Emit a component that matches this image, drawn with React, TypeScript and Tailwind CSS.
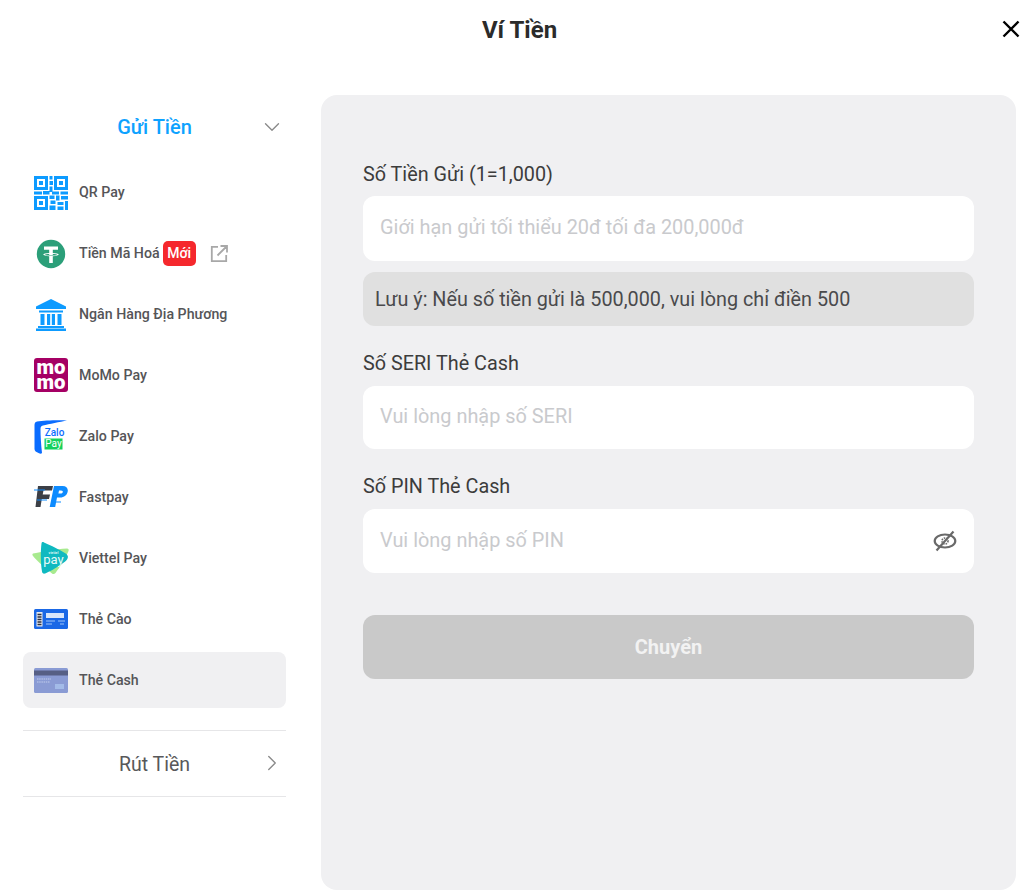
import React from "react";
import { ChevronDown, ChevronRight } from "lucide-react";

const QrIcon = () => (
  <svg width="34" height="34" viewBox="0 0 34 34" fill="#0d9bff">
    <path fillRule="evenodd" d="M0 0h14v14H0zM3 3v8h8V3zM20 0h14v14H20zM23 3v8h8V3zM0 20h14v14H0zM3 23v8h8v-8z" />
    <rect x="5" y="5" width="4" height="4" />
    <rect x="25" y="5" width="4" height="4" />
    <rect x="5" y="25" width="4" height="4" />
    <path d="M15.500 0h3v3.500h-3zM15.500 5h3.500v4h-3.500zM15.500 10.500h3V16h-3zM0 15.500h8v3H0zM9 15h6.500v3.500H9zM18 15.500h7v3h-7zM26.500 15.500H34v3h-7.500zM15.500 19.500h5v3.500h-5zM22 19.500h3.500v5H22zM27 20h7v3.500h-7zM16.500 24.500h5v3.500h-5zM23.500 26h6v3h-6zM31 25h3v9h-3zM15.500 29.500h6V34h-6zM23.500 30.500h6V34h-6z" />
  </svg>
);

const TetherIcon = () => (
  <svg width="30" height="30" viewBox="0 0 30 30">
    <circle cx="15" cy="15" r="14.200" fill="#2b9f79" />
    <path fill="#fff" d="M8 7.500h14v3.200h-5.200v3.200c3.300.2 5.900.9 5.900 1.700s-2.600 1.500-5.900 1.700V24h-3.600v-6.700c-3.300-.2-5.900-.9-5.900-1.700s2.600-1.500 5.900-1.700v-3.200H8z" />
    <path fill="#2b9f79" d="M13.200 14.900c-2.400.1-4.300.4-4.300.8 0 .5 2.700.9 6.100.9s6.100-.4 6.100-.9c0-.4-1.900-.7-4.300-.8v1c-1.200.1-2.400.1-3.600 0z" />
  </svg>
);

const BankIcon = () => (
  <svg width="30" height="32" viewBox="0 0 30 32" fill="#0d9bff">
    <path d="M15 0 30 7.500V10H0V7.500z" />
    <path d="M3 11.500h24v2H3zM4.500 15h4v11h-4zM11 15h3.200v11H11zM15.800 15H19v11h-3.200zM21.500 15h4v11h-4zM2 27h26v2H2zM0 29.500h30V32H0z" />
  </svg>
);

const MomoIcon = () => (
  <svg width="34" height="34" viewBox="0 0 34 34" className="-translate-y-px overflow-visible">
    <rect width="34" height="34" rx="3" fill="#a50064" />
    <text x="17" y="15.500" textAnchor="middle" textLength="29" lengthAdjust="spacingAndGlyphs" fontFamily="Roboto, sans-serif" fontWeight="900" fontSize="20" fill="#fff">mo</text>
    <text x="17" y="30.500" textAnchor="middle" textLength="29" lengthAdjust="spacingAndGlyphs" fontFamily="Roboto, sans-serif" fontWeight="900" fontSize="20" fill="#fff">mo</text>
  </svg>
);

const ZaloIcon = () => (
  <svg width="34" height="34" viewBox="0 0 34 34">
    <path fill="#0a6cff" d="M3 1.500C10 .5 24 0 33 .5 26 2 15 4 9 5.500 7 6 6.500 7 6.500 9c0 7 .5 15 1.500 24-.5.8-2 .8-3 .2C2 32 .5 31 .5 29V5C.5 3 1.500 1.800 3 1.500z" />
    <text x="20.500" y="16" textAnchor="middle" fontFamily="Roboto, sans-serif" fontWeight="500" fontSize="10" fill="#0a6cff">Zalo</text>
    <rect x="10.500" y="18.500" width="18" height="11" fill="#13d15c" />
    <text x="19.500" y="27" textAnchor="middle" fontFamily="Roboto, sans-serif" fontSize="10" fill="#fff">Pay</text>
  </svg>
);

const FastpayIcon = () => (
  <svg width="34" height="24" viewBox="0 0 34 24">
    <path fill="#3c3f46" d="M4 1h15l-1 4.500H9.500L8.700 9.500H16l-1 4.500H7.800L6.500 22h-5z" />
    <path fill="#0d8bff" d="M20 1h8.500c4 0 5.800 2.500 5.200 5.500-.6 3.600-3.500 6-7.500 6H23L21.200 22h-5.500z" />
    <path stroke="#0d8bff" strokeWidth="1.200" d="M0 5h11M3 15h10M18 17h9" fill="none" />
    <path fill="#fff" d="M25 5.500h2c1.500 0 2 .8 1.800 1.600-.2 1-1.200 1.500-2.300 1.500h-2.100z" />
  </svg>
);

const ViettelIcon = () => (
  <svg width="38" height="34" viewBox="0 0 38 34">
    <path fill="#a8ea8f" d="M1 12.500C8 11 24 8 35 7.500c1.500 0 2 1 1.500 2.500-2.500 6-8.500 16-13 22-1 1.300-2.500 1.300-3.500.5C13 27 5 20 1 15c-.8-1-.8-2.200 0-2.500z" />
    <path fill="#0fb9c0" d="M12 1.500c-1-.8-2.300-.5-2.500 1-1 7-.8 20 .5 28 .2 1.800 1.500 2.500 3.200 2 5-2 15-8 20-12 2-1.600 2.800-3.500 2.700-5-.2-1.300-1-2.300-2.600-3.300C28 9 19 4.500 12 1.500z" />
    <text x="21.500" y="13" textAnchor="middle" fontFamily="Roboto, sans-serif" fontSize="3.500" fontWeight="700" fill="#dff7f3">viettel</text>
    <text x="21.500" y="23" textAnchor="middle" fontFamily="Roboto, sans-serif" fontSize="13" fill="#e8fbf8">pay</text>
  </svg>
);

const ScratchIcon = () => (
  <svg width="34" height="20" viewBox="0 0 34 20">
    <rect width="34" height="20" rx="1.500" fill="#1a68e6" />
    <rect x="2.500" y="3" width="6" height="14.500" fill="#e5e9f0" />
    <path stroke="#2c3140" strokeWidth="1.300" d="M3.500 5.500h4M3.500 8h4M3.500 10.500h4M3.500 13h4M3.500 15.500h4" />
    <rect x="12" y="4" width="18" height="5" fill="#d8e6fb" />
    <path stroke="#9fc4f7" strokeWidth="1" d="M12 12h9M12 15h6M24 12h7M26 15h4" />
  </svg>
);

const CashIcon = () => (
  <svg width="34" height="25" viewBox="0 0 34 25">
    <rect width="34" height="25" rx="1.500" fill="#8a9bd4" />
    <rect y="2.500" width="34" height="5" fill="#565f85" />
    <rect x="21" y="16" width="9" height="5" fill="#a3bbe8" />
    <path stroke="#c2cdec" strokeWidth="1" strokeDasharray="1.500 .7" d="M3 11h14M3 14h13" />
  </svg>
);

const ExternalIcon = () => (
  <svg width="18" height="18" viewBox="0 0 18 18" fill="none" stroke="#a8a8a8" strokeWidth="1.800" className="ml-[14px]">
    <path d="M8 1.800H1.800v14.400h14.400V10M7.500 10.500 16.500 1.500M10.500 1h6.500v6.500" />
  </svg>
);

const EyeSlashIcon = () => (
  <svg width="24" height="22" viewBox="0 0 24 22" fill="none" stroke="#696969" strokeWidth="2.200">
    <ellipse cx="12" cy="11" rx="10.300" ry="6.500" />
    <circle cx="12" cy="11" r="3" strokeWidth="1.600" strokeDasharray="1.500 1" />
    <path d="M3.500 20.500 20.500 1.500" />
  </svg>
);

const items: { label: string; icon: React.ReactNode; extra?: boolean; active?: boolean }[] = [
  { label: "QR Pay", icon: <QrIcon /> },
  { label: "Tiền Mã Hoá", icon: <TetherIcon />, extra: true },
  { label: "Ngân Hàng Địa Phương", icon: <BankIcon /> },
  { label: "MoMo Pay", icon: <MomoIcon /> },
  { label: "Zalo Pay", icon: <ZaloIcon /> },
  { label: "Fastpay", icon: <FastpayIcon /> },
  { label: "Viettel Pay", icon: <ViettelIcon /> },
  { label: "Thẻ Cào", icon: <ScratchIcon /> },
  { label: "Thẻ Cash", icon: <CashIcon />, active: true },
];

const Field = ({ placeholder, h, eye }: { placeholder: string; h: string; eye?: boolean }) => (
  <div className={`flex items-center justify-between rounded-xl bg-white px-[17px] ${h}`}>
    <span className="pb-[1px] text-[19.900px] leading-none text-[#c9cacd]">{placeholder}</span>
    {eye && <EyeSlashIcon />}
  </div>
);

const Label = ({ children, className }: { children: React.ReactNode; className: string }) => (
  <div className={`text-[19.800px] leading-[24px] text-[#3c3c3c] ${className}`}>{children}</div>
);

export default function App() {
  return (
    <div className="relative h-[890px] w-[1024px] overflow-hidden bg-white font-['Roboto',sans-serif]">
      <div className="flex h-[95px] justify-center pl-[15px] pt-[14px]">
        <h1 className="text-[24px] font-bold leading-[32px] text-[#2b2b2b]">Ví Tiền</h1>
      </div>
      <button className="absolute left-[1002px] top-[20px]">
        <svg width="18" height="18" viewBox="0 0 18 18" fill="none" stroke="#000" strokeWidth="2.400">
          <path d="M1.500 1.500 16.500 16.500M16.500 1.500 1.500 16.500" />
        </svg>
      </button>

      <div className="flex h-[795px] pl-[23px]">
        <aside className="w-[263px] shrink-0">
          <div className="relative flex h-[69px] items-center pb-[5px]">
            <div className="flex-1 text-center text-[20px] font-medium text-[#0da2ff]">Gửi Tiền</div>
            <ChevronDown size={26} strokeWidth={1.25} className="absolute right-[1px] top-[19px] text-[#8a8a8a]" />
          </div>
          <div className="flex flex-col gap-[4.900px] pt-[1px]">
            {items.map((it) => (
              <div
                key={it.label}
                className={`flex h-[56px] items-center rounded-lg ${it.active ? "bg-[#f0f0f2]" : ""}`}
              >
                <div className="flex w-[56px] shrink-0 items-center justify-center">{it.icon}</div>
                <span className={`text-[14.200px] font-medium text-[#555558] ${it.active ? "pt-[1px]" : ""}`}>{it.label}</span>
                {it.extra && (
                  <>
                    <span className="ml-[3px] flex h-[25px] w-[33px] items-center justify-center rounded-[5px] bg-[#f5282d] text-[14px] font-medium text-white">
                      Mới
                    </span>
                    <ExternalIcon />
                  </>
                )}
              </div>
            ))}
          </div>
          <div className="relative mt-[22px] flex h-[67px] items-center border-y border-[#e6e6e8]">
            <div className="flex-1 pt-[2px] text-center text-[19.500px] text-[#58585a]">Rút Tiền</div>
            <ChevronRight size={26} strokeWidth={1.25} className="absolute right-[1px] top-[19px] text-[#8a8a8a]" />
          </div>
        </aside>

        <main className="ml-[35px] h-[795px] w-[695px] shrink-0 rounded-2xl bg-[#f0f0f2] px-[42px] pt-[68px]">
          <Label className="mb-[9px]">Số Tiền Gửi (1=1,000)</Label>
          <Field placeholder="Giới hạn gửi tối thiểu 20đ tối đa 200,000đ" h="h-[65px]" />
          <div className="mt-[11px] flex h-[54px] items-center rounded-xl bg-[#e0e0e0] pl-[12px] pt-[2px] text-[19.800px] text-[#4a4a4c]">
            Lưu ý: Nếu số tiền gửi là 500,000, vui lòng chỉ điền 500
          </div>
          <Label className="mb-[10px] mt-[26px]">Số SERI Thẻ Cash</Label>
          <Field placeholder="Vui lòng nhập số SERI" h="h-[63px]" />
          <Label className="mb-[10px] mt-[26px]">Số PIN Thẻ Cash</Label>
          <Field placeholder="Vui lòng nhập số PIN" h="h-[64px]" eye />
          <div className="mt-[42px] flex h-[64px] items-center justify-center rounded-xl bg-[#c9c9c9] text-[20px] font-bold text-[#f2f2f2]">
            Chuyển
          </div>
        </main>
      </div>
    </div>
  );
}
